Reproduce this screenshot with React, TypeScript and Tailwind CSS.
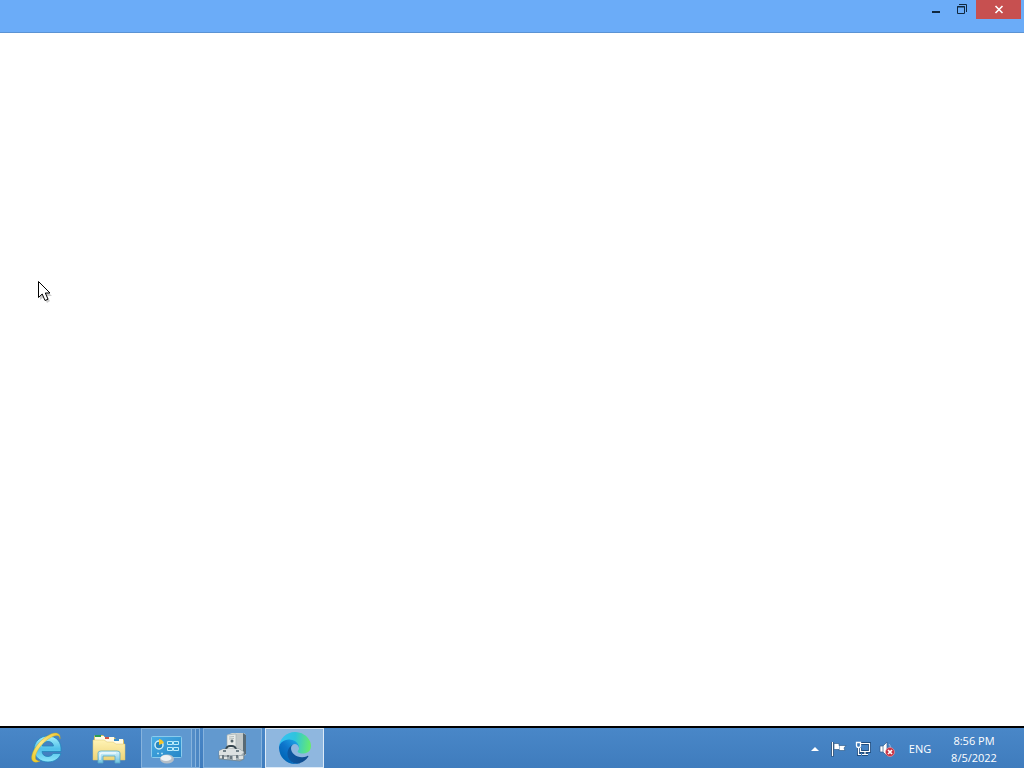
import React from 'react';

function ExplorerIcon() {
  return (
    <svg width="36" height="36" viewBox="0 0 36 36" aria-hidden="true">
      <defs>
        <linearGradient id="ie-blue" x1="0" y1="0" x2="0" y2="1">
          <stop offset="0" stopColor="#a6f0fb" />
          <stop offset="0.5" stopColor="#4fc0ea" />
          <stop offset="1" stopColor="#8ce6fa" />
        </linearGradient>
        <linearGradient id="ie-gold" x1="1" y1="0" x2="0" y2="1">
          <stop offset="0" stopColor="#f2c62c" />
          <stop offset="0.5" stopColor="#fbe98a" />
          <stop offset="1" stopColor="#eec91f" />
        </linearGradient>
      </defs>
      <path d="M19 6C11 6 5 12 5 19C5 27 11 32 19 32C25 32 30 29 32 23.500H24C23 25.500 21 26.500 19 26.500C15.500 26.500 13.200 24.500 13 21.500H32C33 12 27.500 6 19 6ZM13.300 16C14 13 16 11.500 19 11.500C22 11.500 24 13 24.500 16Z" fill="url(#ie-blue)" fillRule="evenodd" stroke="#2387bd" strokeWidth="0.8" />
      <path d="M31 9C32 4 28 1.500 22 4C13 8 5 17 3 25C1.500 31 5 34 11 31C7 31 5.500 29 7 24C10 16 18 8.500 25 6C29 4.500 31 6 31 9Z" fill="url(#ie-gold)" stroke="#c9a91f" strokeWidth="0.4" />
    </svg>
  );
}

function FolderIcon() {
  return (
    <svg width="36" height="36" viewBox="0 0 36 36" aria-hidden="true">
      <defs>
        <linearGradient id="folder" x1="0" y1="0" x2="0" y2="1">
          <stop offset="0" stopColor="#fff3b5" />
          <stop offset="1" stopColor="#eed477" />
        </linearGradient>
        <linearGradient id="stand" x1="0" y1="0" x2="0" y2="1">
          <stop offset="0" stopColor="#def7ff" />
          <stop offset="1" stopColor="#69bfdf" />
        </linearGradient>
      </defs>
      <path d="M3 7Q3 5 5 5H12L14 7H23L25 9H31Q33 9 33 11V29H3Z" fill="#dec260" />
      <path d="M4 6H13V10H4ZM13 7H23V12H13ZM22 9H32V14H22Z" fill="#fffbe5" />
      <path d="M4 5H10V7H4Z" fill="#2c9f50" />
      <path d="M14 7H18V9H14Z" fill="#d45642" />
      <path d="M23 9H28V11H23Z" fill="#378bc9" />
      <path d="M2 10H13L16 12H22L25 14H34V30H2Z" fill="url(#folder)" stroke="#ddc46c" strokeWidth="0.5" />
      <path d="M7 33V23Q7 21 10 21H26Q29 21 29 23V33H24V26H12V33Z" fill="url(#stand)" stroke="#58a8c5" strokeWidth="0.8" />
      <path d="M9 30V25Q9 23 11 23H25" fill="none" stroke="#fff" strokeWidth="1" />
    </svg>
  );
}

function ControlPanelIcon() {
  return (
    <svg width="36" height="36" viewBox="0 0 36 36" aria-hidden="true">
      <defs>
        <linearGradient id="panel" x1="0" y1="0" x2="1" y2="1">
          <stop offset="0" stopColor="#49ade6" />
          <stop offset="1" stopColor="#2586c6" />
        </linearGradient>
      </defs>
      <rect x="2.500" y="6.500" width="30" height="21" rx="1" fill="url(#panel)" stroke="#8bcbed" />
      <circle cx="10" cy="15" r="4" fill="#2786bd" stroke="#cceefb" strokeWidth="1.500" />
      <path d="M10 15V9A6 6 0 0 1 15 13Z" fill="#f5c52d" />
      <path d="M18.500 11.500H23.500V14.500H18.500ZM24.500 11.500H29.500V14.500H24.500ZM18.500 17.500H23.500V20.500H18.500ZM24.500 17.500H29.500V20.500H24.500Z" fill="#319bd0" stroke="#b9eafa" />
      <path d="M8 23.500H10M12 23.500H14" stroke="#a6dbf4" strokeWidth="1.500" />
      <ellipse cx="18" cy="29" rx="7" ry="4.500" fill="#b5bfc8" />
      <ellipse cx="17" cy="28" rx="5.500" ry="3" fill="#edf1f3" />
    </svg>
  );
}

function ComputerToolsIcon() {
  return (
    <svg width="36" height="36" viewBox="0 0 36 36" aria-hidden="true">
      <path d="M12 5L17 3H29L31 5V25L24 27H12Z" fill="#d1d5d3" />
      <path d="M21 4L29 3V25L22 27Z" fill="#c2c8c8" />
      <path d="M28 3L31 5V24L28 26Z" fill="#596a74" />
      <path d="M12 5L21 4V25H12Z" fill="#e9ece9" stroke="#9ba9ad" strokeWidth="0.6" />
      <path d="M14 7L19 6.500M14 9L19 8.500" stroke="#b4bbba" />
      <circle cx="17" cy="11" r="1.500" fill="#57666b" />
      <path d="M11 21V19Q12 16 15 16H17Q20 16 21 19V21" fill="none" stroke="#36464e" strokeWidth="1.800" />
      <path d="M4 21L8 19H24L29 22V29L25 31L4 29Z" fill="#a4afb4" stroke="#6c7d86" strokeWidth="0.600" />
      <path d="M4 21L8 19H24L29 22L26 25H4Z" fill="#dce1e1" />
      <path d="M8 25V29M13 25V27M16 26V29M22 25V28" stroke="#59676d" strokeWidth="1.500" />
      <path d="M5 26H7V28H5ZM9 27H12V29H9ZM18 26H21V30H18ZM24 26H28V29H24Z" fill="#dfe3e1" />
      <path d="M8 20H11V22H8ZM21 20H24V22H21Z" fill="#718087" />
    </svg>
  );
}

function EdgeIcon() {
  return (
    <svg width="32" height="32" viewBox="0 0 256 256" aria-hidden="true">
      <defs>
        <linearGradient id="edge-navy" x1="60" y1="177" x2="240" y2="177" gradientUnits="userSpaceOnUse">
          <stop stopColor="#0c59a4" />
          <stop offset="1" stopColor="#114a8b" />
        </linearGradient>
        <linearGradient id="edge-blue" x1="155" y1="100" x2="45" y2="220" gradientUnits="userSpaceOnUse">
          <stop stopColor="#1b9de2" />
          <stop offset="0.5" stopColor="#0e74cb" />
          <stop offset="1" stopColor="#0067b8" />
        </linearGradient>
        <linearGradient id="edge-green" x1="20" y1="80" x2="250" y2="110" gradientUnits="userSpaceOnUse">
          <stop stopColor="#35c1f1" />
          <stop offset="0.45" stopColor="#2fc4dd" />
          <stop offset="1" stopColor="#66eb6e" />
        </linearGradient>
      </defs>
      <path d="M231 190a94 94 0 0 1-11 5 102 102 0 0 1-36 6c-47 0-88-32-88-74a31 31 0 0 1 16-27c-43 2-54 46-54 72 0 74 68 81 82 81 8 0 20-2 27-4l1-1a128 128 0 0 0 67-53 4 4 0 0 0-4-5Z" fill="url(#edge-navy)" />
      <path d="M106 241a79 79 0 0 1-23-21 81 81 0 0 1 29-120c3-1 8-4 16-4a32 32 0 0 1 25 13 32 32 0 0 1 6 19c0-1 25-80-80-80C35 48 0 90 0 126a130 130 0 0 0 12 56 128 128 0 0 0 156 67 76 76 0 0 1-62-8Z" fill="url(#edge-blue)" />
      <path d="M152 149c-1 1-3 3-3 6 0 3 2 6 5 8 14 10 41 9 41 9a59 59 0 0 0 30-8 61 61 0 0 0 31-53c0-22-8-37-11-43C224 28 179 0 128 0A128 128 0 0 0 0 126c1-37 37-66 80-66 4 0 24 0 42 10 16 8 25 19 31 30 6 11 7 24 7 30 0 5-2 13-8 19Z" fill="url(#edge-green)" />
    </svg>
  );
}

function FlagIcon() {
  return (
    <svg width="16" height="16" viewBox="0 0 16 16" aria-hidden="true">
      <path d="M1.500 1V15.500" stroke="#274e78" strokeWidth="3" />
      <path d="M1.500 1V15" stroke="#fff" strokeWidth="1.200" />
      <path d="M3 2.500H8V4.500H15L13 7L14 9.500H8V8.500H3Z" fill="#fff" stroke="#315e8c" strokeWidth="0.700" />
      <path d="M8.500 5V9" stroke="#799fc5" strokeWidth="0.700" />
    </svg>
  );
}

function NetworkIcon() {
  return (
    <svg width="16" height="16" viewBox="0 0 16 16" fill="none" aria-hidden="true">
      <path d="M6 2.500H14.500V10.500H5.500V7M10 11V13M7 13.500H13M3.500 6V13.500H6" stroke="#214f82" strokeWidth="3" />
      <path d="M6 2.500H14.500V10.500H5.500V7M10 11V13M7 13.500H13M3.500 6V13.500H6" stroke="#fff" strokeWidth="1.200" />
      <path d="M1.500 1.500H5.500V4.500Q5.500 6.500 3.500 6.500Q1.500 6.500 1.500 4.500Z" fill="#3b78b8" stroke="#fff" strokeWidth="1.300" />
    </svg>
  );
}

function SoundIcon() {
  return (
    <svg width="16" height="16" viewBox="0 0 16 16" aria-hidden="true">
      <path d="M1 5H4L8 1V15L4 11H1Z" fill="#fff" stroke="#315a89" strokeWidth="0.700" />
      <path d="M4 5V11" stroke="#6f8aa8" />
      <path d="M10 3Q12 5 11 7" fill="none" stroke="#9fc0e0" />
      <circle cx="11" cy="11" r="4.500" fill="#c93042" stroke="#edabb0" strokeWidth="0.600" />
      <path d="M9 9L13 13M13 9L9 13" stroke="#fff" strokeWidth="1.700" />
    </svg>
  );
}

const slot = 'flex h-10 w-[59px] items-center justify-center';
const running = 'flex h-10 items-center justify-center border';
const tray = 'flex h-10 w-6 items-center justify-center';
const caption = 'flex h-[19px] items-center justify-center';

export default function App() {
  return (
    <div className="flex h-screen flex-col overflow-hidden bg-white font-['Open_Sans','Noto_Sans',sans-serif]">
      <header className="flex h-[33px] shrink-0 items-start justify-end border-b border-[#5b93d4] bg-[#6bacf8] pr-[3px]">
        <button aria-label="Minimize" className={`${caption} w-[26px]`}>
          <svg width="16" height="16" viewBox="0 0 16 16" aria-hidden="true">
            <path d="M4 9H12V11H4Z" fill="#10283f" />
          </svg>
        </button>
        <button aria-label="Restore" className={`${caption} w-[27px]`}>
          <svg width="16" height="16" viewBox="0 0 16 16" fill="none" stroke="#10283f" aria-hidden="true">
            <path d="M4 2.500H11.500V10" />
            <path d="M2.500 4.500H9.500V11.500H2.500ZM2 5H10" />
          </svg>
        </button>
        <button aria-label="Close" className={`${caption} w-[45px] bg-[#c75050]`}>
          <svg width="16" height="16" viewBox="0 0 16 16" aria-hidden="true">
            <path d="M4.500 4L11.500 11M11.500 4L4.500 11" stroke="#fff" strokeWidth="1.600" />
          </svg>
        </button>
      </header>

      <main className="min-h-0 flex-1 bg-white" />

      <footer className="flex h-[42px] shrink-0 items-center justify-between border-t-2 border-black bg-linear-to-b from-[#4987c8] to-[#3f7cbd] pl-[17px]">
        <nav aria-label="Taskbar" className="flex gap-[3px]">
          <button aria-label="Internet Explorer" className={slot}><ExplorerIcon /></button>
          <button aria-label="File Explorer" className={slot}><FolderIcon /></button>
          <button aria-label="Control Panel" className="flex h-10 w-[59px]">
            <span className={`${running} w-[51px] border-[#87b3dd] bg-[#5f98d0]`}><ControlPanelIcon /></span>
            <span className="h-10 w-1 border-y border-r border-[#87b3dd] bg-[#538dc8]" />
            <span className="h-10 w-1 border-y border-r border-[#87b3dd] bg-[#4c87c4]" />
          </button>
          <button aria-label="Computer Management" className={`${running} w-[59px] border-[#87b3dd] bg-[#6299cf]`}><ComputerToolsIcon /></button>
          <button aria-label="Microsoft Edge" className={`${running} w-[59px] border-[#dceaf7] bg-[#8fb7df]`}><EdgeIcon /></button>
        </nav>

        <div className="flex items-center pt-[2px] text-[11px] text-white">
          <button aria-label="Show hidden icons" className={tray}>
            <svg width="8" height="4" viewBox="0 0 8 4" aria-hidden="true"><path d="M0 4L4 0L8 4Z" fill="#fff" /></svg>
          </button>
          <button aria-label="Action Center" className={tray}><FlagIcon /></button>
          <button aria-label="Network" className={tray}><NetworkIcon /></button>
          <button aria-label="Volume muted" className={tray}><SoundIcon /></button>
          <button className="flex h-10 w-[42px] items-center justify-center">ENG</button>
          <button className="flex h-10 w-[66px] flex-col items-center justify-center leading-[17px]">
            <span>8:56 PM</span>
            <span>8/5/2022</span>
          </button>
          <button aria-label="Show desktop" className="h-10 w-[17px]" />
        </div>
      </footer>

      <svg className="pointer-events-none absolute top-[281px] left-[38px]" width="16" height="24" viewBox="0 0 16 24" aria-hidden="true">
        <path d="M2 3V19L6 16L9 22L12 20L9 15H14Z" fill="#000" opacity="0.2" />
        <path d="M0.500 0.500V16.500L4.200 13L7 19.500L10 18.200L7.300 12H12Z" fill="#fff" stroke="#000" />
      </svg>
    </div>
  );
}
